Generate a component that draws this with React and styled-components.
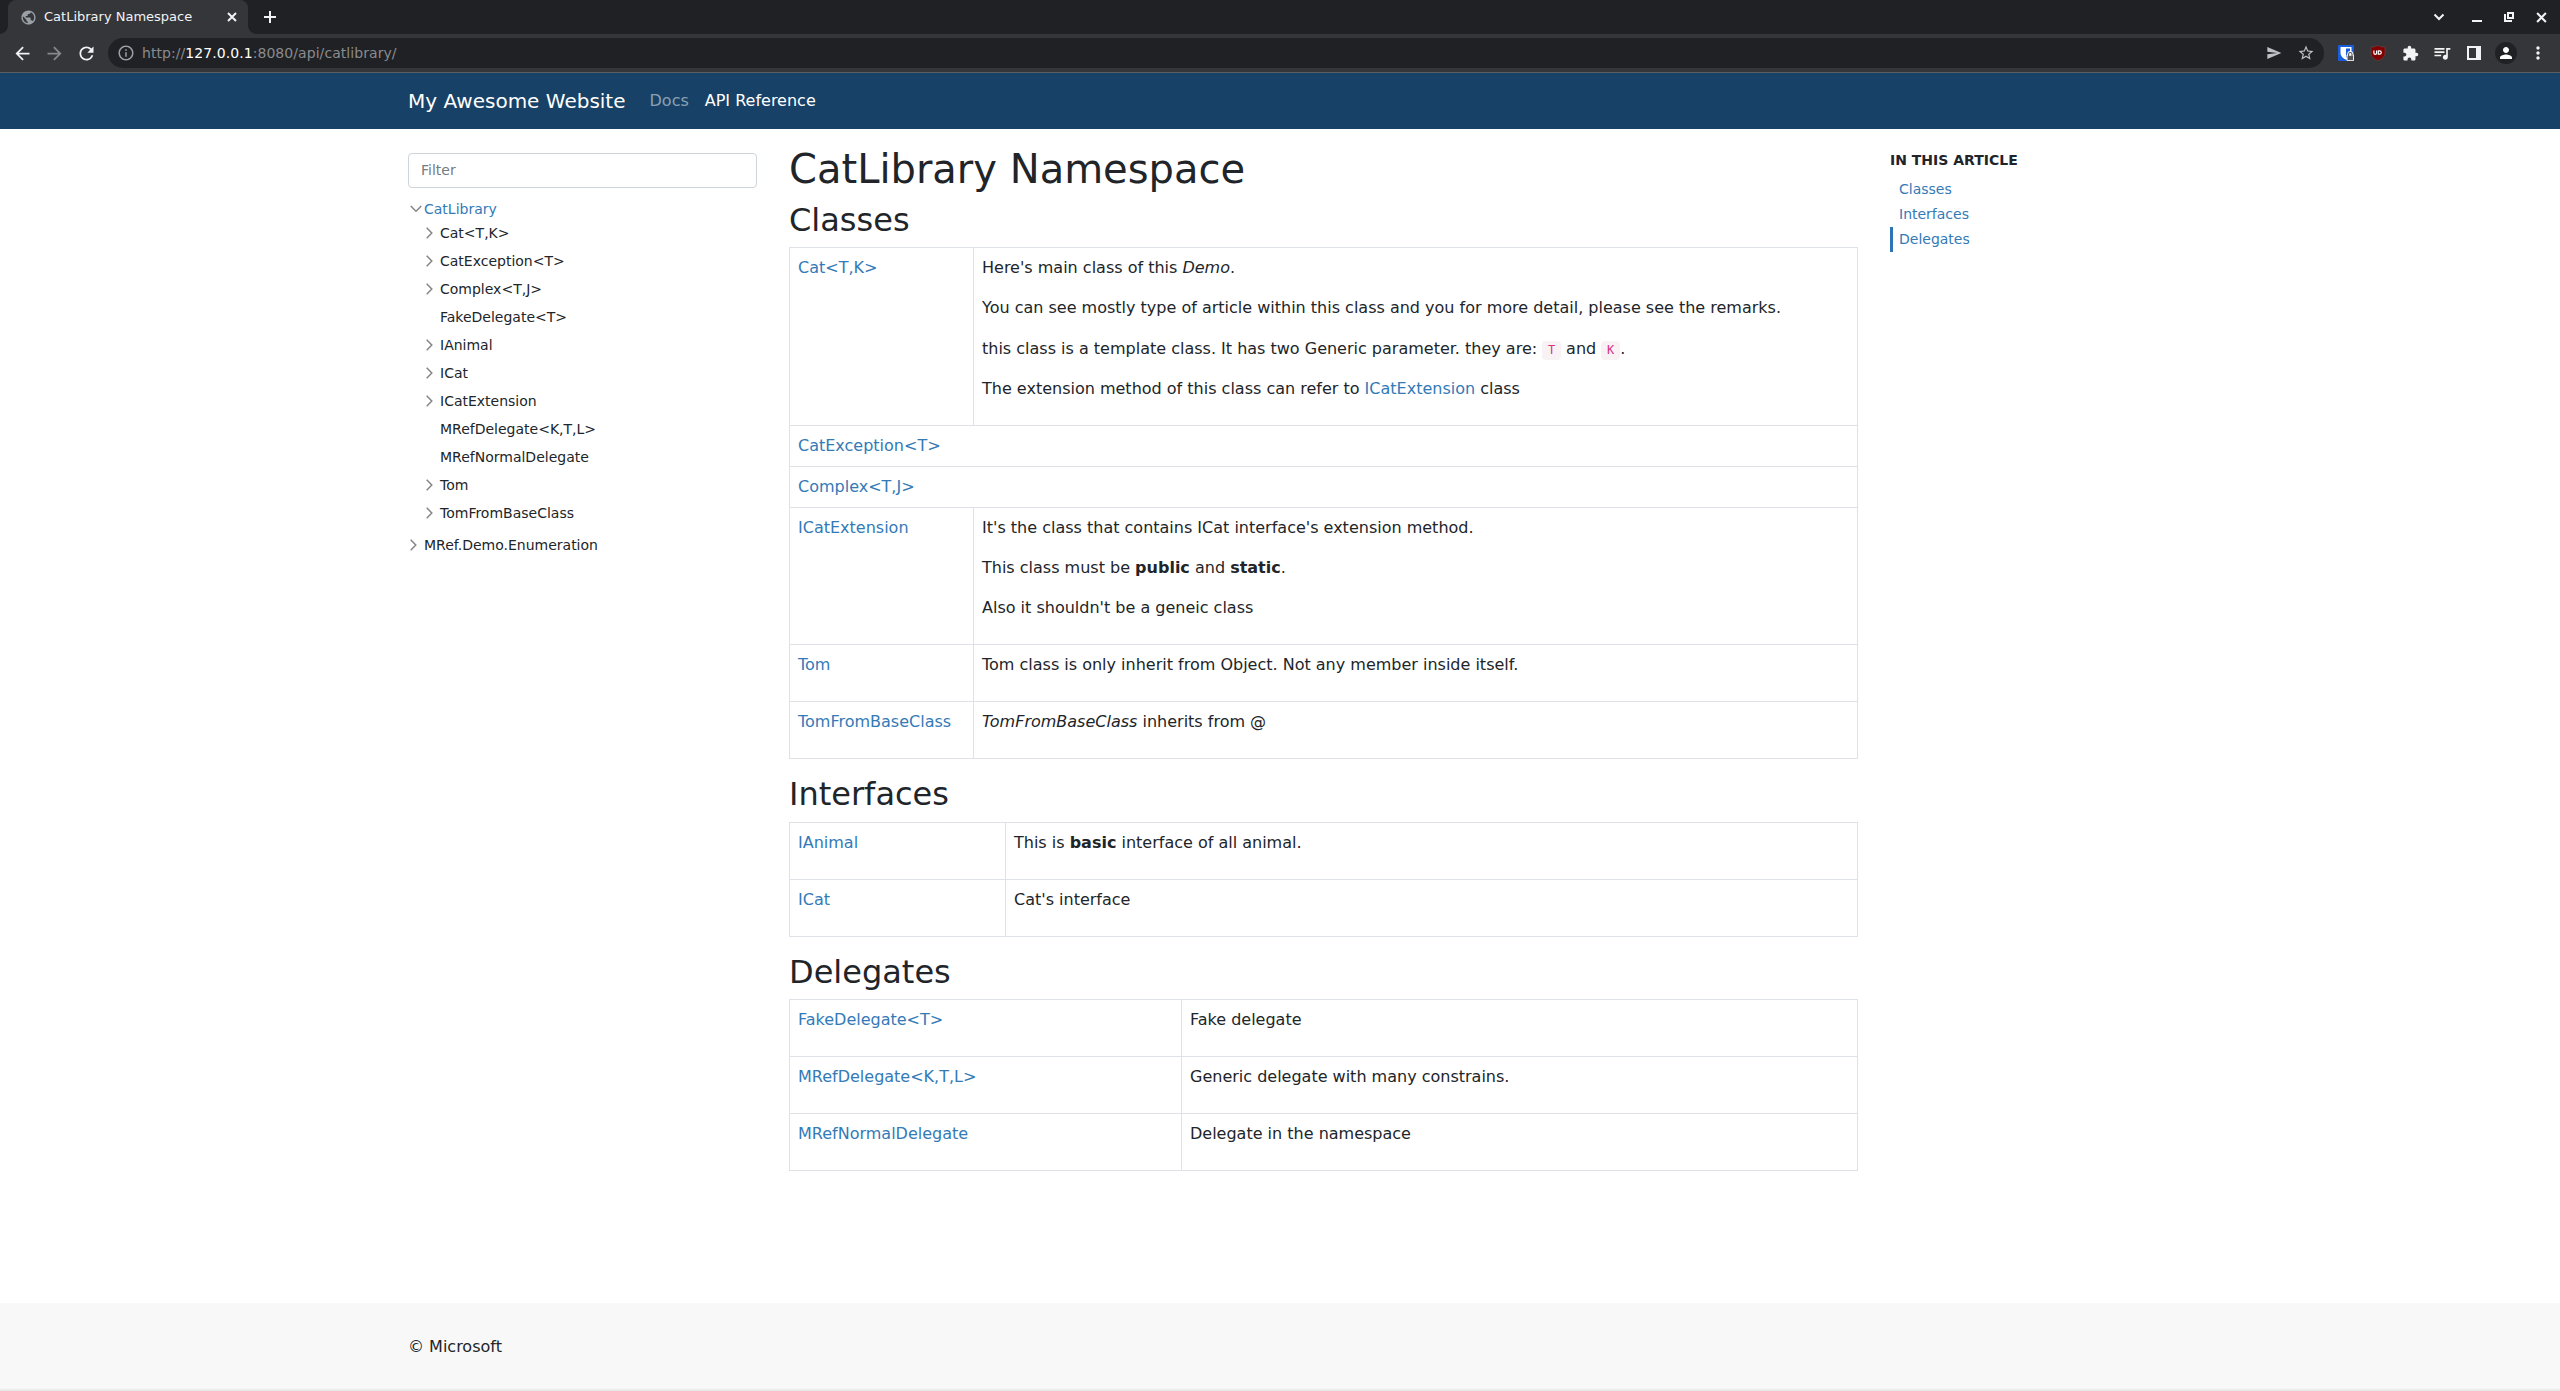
import React from "react";
import styled, { createGlobalStyle } from "styled-components";
import {
  MdArrowBack,
  MdArrowForward,
  MdRefresh,
  MdInfoOutline,
  MdStarBorder,
  MdExtension,
  MdQueueMusic,
  MdPublic,
  MdPerson,
  MdMoreVert,
  MdSend,
} from "react-icons/md";

const GlobalStyle = createGlobalStyle`
  *, *::before, *::after { box-sizing: border-box; }
  body {
    margin: 0;
    background: #fff;
    color: #212529;
    font: 16px/24px "DejaVu Sans", sans-serif;
  }
  h1, h2, p { margin: 0; font-weight: 400; }
  svg { display: block; flex: none; }
`;

const Window = styled.div`
  display: flex;
  flex-direction: column;
  height: 1391px;
  overflow: hidden;
`;

/* ---------- browser chrome ---------- */

const TabStrip = styled.div`
  display: flex;
  align-items: center;
  height: 34px;
  padding: 0 2px 0 8px;
  background: #202124;
  color: #f1f3f4;
`;

const Tab = styled.div`
  position: relative;
  display: flex;
  align-items: center;
  width: 240px;
  height: 34px;
  padding: 0 11px 0 12px;
  border-radius: 8px 8px 0 0;
  background: #35363a;
  font-size: 13px;

  &::before,
  &::after {
    content: "";
    position: absolute;
    bottom: 0;
    width: 8px;
    height: 8px;
  }
  &::before {
    left: -8px;
    background: radial-gradient(circle at 0 0, transparent 7.5px, #35363a 8px);
  }
  &::after {
    right: -8px;
    background: radial-gradient(circle at 100% 0, transparent 7.5px, #35363a 8px);
  }
`;

const TabTitle = styled.span`
  flex: 1;
  margin-left: 7px;
  line-height: 32px;
  white-space: nowrap;
`;

const Slot = styled.span`
  display: flex;
  align-items: center;
  justify-content: center;
  width: ${(p) => p.$width || 32}px;
  height: 100%;
  margin-right: ${(p) => p.$gap || 0}px;
  color: ${(p) => p.$color || "#f1f3f4"};
`;

const Spacer = styled.span`
  flex: 1;
`;

const Toolbar = styled.div`
  display: flex;
  align-items: center;
  height: 39px;
  padding: 0 6px;
  border-bottom: 1px solid #5c5d60;
  background: #35363a;
`;

const Omnibox = styled.div`
  display: flex;
  align-items: center;
  flex: 1;
  height: 30px;
  margin: 0 6px;
  padding: 0 2px 0 9px;
  border-radius: 15px;
  background: #202124;
`;

const Url = styled.span`
  flex: 1;
  margin-left: 7px;
  color: #898b8e;
  font-size: 14px;
  line-height: 30px;
  letter-spacing: 0.06px;

  b {
    color: #fff;
    font-weight: 400;
  }
`;

const Avatar = styled.span`
  display: flex;
  align-items: center;
  justify-content: center;
  width: 22px;
  height: 22px;
  border-radius: 50%;
  background: #202124;
  color: #fff;
`;

/* ---------- site ---------- */

const Navbar = styled.header`
  display: flex;
  align-items: center;
  flex: none;
  height: 56px;
  padding: 0 408px;
  background: #174166;
  color: #fff;
`;

const Brand = styled.span`
  margin-right: 24px;
  font-size: 20px;
  line-height: 30px;
`;

const NavLink = styled.span`
  margin-right: 16px;
  color: ${(p) => (p.$active ? "#fff" : "rgba(255, 255, 255, 0.5)")};
`;

const Body = styled.div`
  display: flex;
  flex: 1;
  gap: 32px;
  padding: 16px 408px 0;
`;

const Sidebar = styled.nav`
  flex: none;
  width: 349px;
  padding-top: 8px;
  font-size: 14px;
`;

const Filter = styled.input`
  display: block;
  width: 100%;
  height: 35px;
  margin-bottom: 11px;
  padding: 0 12px 1px;
  border: 1px solid #ced4da;
  border-radius: 4px;
  font: 14px "DejaVu Sans", sans-serif;

  &::placeholder {
    color: #757b81;
    opacity: 1;
  }
`;

const TreeRow = styled.div`
  display: flex;
  align-items: center;
  height: ${(p) => (p.$open ? 20 : 28)}px;
  margin-top: ${(p) => (p.$separated ? 4 : 0)}px;
  padding-left: ${(p) => p.$level * 16}px;
  color: ${(p) => (p.$open ? "#337ab7" : "#212529")};
`;

const TreeIcon = styled.span`
  flex: none;
  width: 16px;
  padding-left: 1.6px;
`;

const Article = styled.article`
  flex: none;
  width: 1069px;
`;

const Title = styled.h1`
  margin-bottom: 8px;
  font-size: 40px;
  line-height: 48px;
`;

const SectionTitle = styled.h2`
  margin-bottom: 8px;
  font-size: 32px;
  line-height: 38.4px;
`;

const Table = styled.table`
  width: 100%;
  margin-bottom: 16px;
  border-collapse: collapse;
  table-layout: fixed;

  td {
    padding: 8px;
    border: 1px solid #dee2e6;
    vertical-align: top;
  }
`;

const NameCol = styled.col`
  width: ${(p) => p.$width}px;
`;

const Link = styled.a`
  color: #337ab7;
`;

const Paragraph = styled.p`
  margin-bottom: 16px;
  line-height: ${(p) => (p.$tall ? 25 : 24)}px;
`;

const Code = styled.code`
  padding: 2.4px 5.8px;
  border-radius: 4px;
  background: #f9f2f4;
  color: #d63384;
  font: 12px "DejaVu Sans Mono", monospace;
`;

const Toc = styled.aside`
  padding-top: 4px;
  font-size: 14px;
`;

const TocTitle = styled.div`
  height: 28px;
  font-weight: 700;
  line-height: 22px;
`;

const TocItem = styled.div`
  height: 25px;
  padding-left: 6px;
  border-left: 3px solid ${(p) => (p.$active ? "#2e75b5" : "transparent")};
  color: #337ab7;
  line-height: 25px;
`;

const Footer = styled.footer`
  flex: none;
  height: 88px;
  padding: 32px 408px 0;
  background: linear-gradient(#f8f8f8 85px, #e4e4e4 88px);
`;

/* ---------- icons ---------- */

const ChevronRight = () => (
  <svg width="8" height="12" fill="none" stroke="#868686" strokeWidth="1.5">
    <path d="M.7.7 5.8 6 .7 11.3" />
  </svg>
);

const ChevronDown = () => (
  <svg width="12" height="8" fill="none" stroke="#868686" strokeWidth="1.5">
    <path d="M.7 1 6 6.2 11.3 1" />
  </svg>
);

const Cross = ({ size, width }) => (
  <svg width={size} height={size} viewBox="0 0 10 10" stroke="currentColor" strokeWidth={width}>
    <path d="M1 1 9 9M9 1 1 9" />
  </svg>
);

const Plus = () => (
  <svg width="12" height="12" stroke="currentColor" strokeWidth="2">
    <path d="M6 0V12M0 6H12" />
  </svg>
);

const TabSearch = () => (
  <svg width="12" height="12" fill="none" stroke="currentColor" strokeWidth="2">
    <path d="M1.500 3.500 6 8 10.500 3.500" />
  </svg>
);

const Minimize = () => (
  <svg width="10" height="10" fill="currentColor">
    <path d="M0 8h10v2H0z" />
  </svg>
);

const Restore = () => (
  <svg width="10" height="10" fill="none" stroke="currentColor">
    <path d="M4 1H9V6H4Z" strokeWidth="2" />
    <path d="M1 2V9H8" strokeWidth="2" />
  </svg>
);

const Bitwarden = () => (
  <svg width="16" height="16">
    <rect width="16" height="16" rx="1" fill="#175ddc" />
    <path d="M2.5 2H13.5V8C13.5 11.5 10.5 13.5 8 14.8 5.5 13.5 2.5 11.5 2.5 8Z" fill="#fff" />
    <path d="M8 3.5H12V8C12 10 10.5 11.5 8 12.7Z" fill="#175ddc" />
    <rect x="8.5" y="9.5" width="7.5" height="6.5" rx="1" fill="#fff" />
    <path d="M10.500 10.500V9a1.800 1.800 0 0 1 3.600 0v1.500" fill="none" stroke="#fff" strokeWidth="2.5" />
    <path d="M10.600 11V9.200a1.700 1.700 0 0 1 3.400 0V11" fill="none" stroke="#555" strokeWidth="1.1" />
    <rect x="9.5" y="10.8" width="5.6" height="4.4" fill="#555" />
  </svg>
);

const UBlock = () => (
  <svg width="16" height="16">
    <path d="M8 .3C10 2 12.5 2 15 2V8.5C15 12 11 14.5 8 15.8 5 14.5 1 12 1 8.5V2C3.5 2 6 2 8 .3Z" fill="#800000" stroke="#68494b" strokeWidth=".6" />
    <path d="M3.900 5.500V8a1.350 1.350 0 0 0 2.700 0V5.500" fill="none" stroke="#fff" strokeWidth="1.2" />
    <path d="M8.300 5.800H9.600a1.600 1.600 0 0 1 0 3.400H8.300Z" fill="none" stroke="#fff" strokeWidth="1.2" />
  </svg>
);

const SidePanel = () => (
  <svg width="14" height="14" fill="#f1f3f4">
    <path fillRule="evenodd" d="M0 0H14V14H0ZM2 2V12H9V2Z" />
  </svg>
);

/* ---------- data ---------- */

const TREE = [
  { label: "CatLibrary", level: 0, open: true },
  { label: "Cat<T,K>", level: 1, expandable: true },
  { label: "CatException<T>", level: 1, expandable: true },
  { label: "Complex<T,J>", level: 1, expandable: true },
  { label: "FakeDelegate<T>", level: 1 },
  { label: "IAnimal", level: 1, expandable: true },
  { label: "ICat", level: 1, expandable: true },
  { label: "ICatExtension", level: 1, expandable: true },
  { label: "MRefDelegate<K,T,L>", level: 1 },
  { label: "MRefNormalDelegate", level: 1 },
  { label: "Tom", level: 1, expandable: true },
  { label: "TomFromBaseClass", level: 1, expandable: true },
  { label: "MRef.Demo.Enumeration", level: 0, expandable: true, separated: true },
];

const SECTIONS = [
  {
    title: "Classes",
    nameWidth: 184,
    rows: [
      {
        name: "Cat<T,K>",
        tallLine: 2,
        summary: [
          <>Here's main class of this <i>Demo</i>.</>,
          "You can see mostly type of article within this class and you for more detail, please see the remarks.",
          <>this class is a template class. It has two Generic parameter. they are: <Code>T</Code> and <Code>K</Code>.</>,
          <>The extension method of this class can refer to <Link>ICatExtension</Link> class</>,
        ],
      },
      { name: "CatException<T>" },
      { name: "Complex<T,J>" },
      {
        name: "ICatExtension",
        summary: [
          "It's the class that contains ICat interface's extension method.",
          <>This class must be <b>public</b> and <b>static</b>.</>,
          "Also it shouldn't be a geneic class",
        ],
      },
      { name: "Tom", summary: ["Tom class is only inherit from Object. Not any member inside itself."] },
      { name: "TomFromBaseClass", summary: [<><i>TomFromBaseClass</i> inherits from @</>] },
    ],
  },
  {
    title: "Interfaces",
    nameWidth: 216,
    rows: [
      { name: "IAnimal", summary: [<>This is <b>basic</b> interface of all animal.</>] },
      { name: "ICat", summary: ["Cat's interface"] },
    ],
  },
  {
    title: "Delegates",
    nameWidth: 392,
    rows: [
      { name: "FakeDelegate<T>", summary: ["Fake delegate"] },
      { name: "MRefDelegate<K,T,L>", summary: ["Generic delegate with many constrains."] },
      { name: "MRefNormalDelegate", summary: ["Delegate in the namespace"] },
    ],
  },
];

function Browser() {
  return (
    <>
      <TabStrip>
        <Tab>
          <MdPublic size={17} color="#9aa0a6" />
          <TabTitle>CatLibrary Namespace</TabTitle>
          <Cross size={10} width={2} />
        </Tab>
        <Slot $width={44}><Plus /></Slot>
        <Spacer />
        <Slot $gap={6}><TabSearch /></Slot>
        <Slot><Minimize /></Slot>
        <Slot><Restore /></Slot>
        <Slot $width={33}><Cross size={11} width={1.9} /></Slot>
      </TabStrip>
      <Toolbar>
        <Slot><MdArrowBack size={21} /></Slot>
        <Slot $color="#86888b"><MdArrowForward size={21} /></Slot>
        <Slot><MdRefresh size={21} /></Slot>
        <Omnibox>
          <MdInfoOutline size={18} color="#9aa0a6" />
          <Url>http://<b>127.0.0.1</b>:8080/api/catlibrary/</Url>
          <Slot $color="#bdc1c6"><MdSend size={16} /></Slot>
          <Slot $color="#bdc1c6"><MdStarBorder size={18} /></Slot>
        </Omnibox>
        <Slot><Bitwarden /></Slot>
        <Slot><UBlock /></Slot>
        <Slot><MdExtension size={17} /></Slot>
        <Slot><MdQueueMusic size={20} /></Slot>
        <Slot><SidePanel /></Slot>
        <Slot><Avatar><MdPerson size={18} /></Avatar></Slot>
        <Slot><MdMoreVert size={20} /></Slot>
      </Toolbar>
    </>
  );
}

function Section({ title, nameWidth, rows }) {
  return (
    <>
      <SectionTitle>{title}</SectionTitle>
      <Table>
        <colgroup>
          <NameCol $width={nameWidth} />
          <col />
        </colgroup>
        <tbody>
          {rows.map((row) => (
            <tr key={row.name}>
              <td colSpan={row.summary ? 1 : 2}><Link>{row.name}</Link></td>
              {row.summary && (
                <td>
                  {row.summary.map((text, i) => (
                    <Paragraph key={i} $tall={row.tallLine === i}>{text}</Paragraph>
                  ))}
                </td>
              )}
            </tr>
          ))}
        </tbody>
      </Table>
    </>
  );
}

export default function App() {
  return (
    <Window>
      <GlobalStyle />
      <Browser />
      <Navbar>
        <Brand>My Awesome Website</Brand>
        <NavLink>Docs</NavLink>
        <NavLink $active>API Reference</NavLink>
      </Navbar>
      <Body>
        <Sidebar>
          <Filter placeholder="Filter" />
          {TREE.map((node) => (
            <TreeRow key={node.label} $level={node.level} $open={node.open} $separated={node.separated}>
              <TreeIcon>
                {node.open && <ChevronDown />}
                {node.expandable && <ChevronRight />}
              </TreeIcon>
              {node.label}
            </TreeRow>
          ))}
        </Sidebar>
        <Article>
          <Title>CatLibrary Namespace</Title>
          {SECTIONS.map((section) => <Section key={section.title} {...section} />)}
        </Article>
        <Toc>
          <TocTitle>IN THIS ARTICLE</TocTitle>
          <TocItem>Classes</TocItem>
          <TocItem>Interfaces</TocItem>
          <TocItem $active>Delegates</TocItem>
        </Toc>
      </Body>
      <Footer>© Microsoft</Footer>
    </Window>
  );
}
